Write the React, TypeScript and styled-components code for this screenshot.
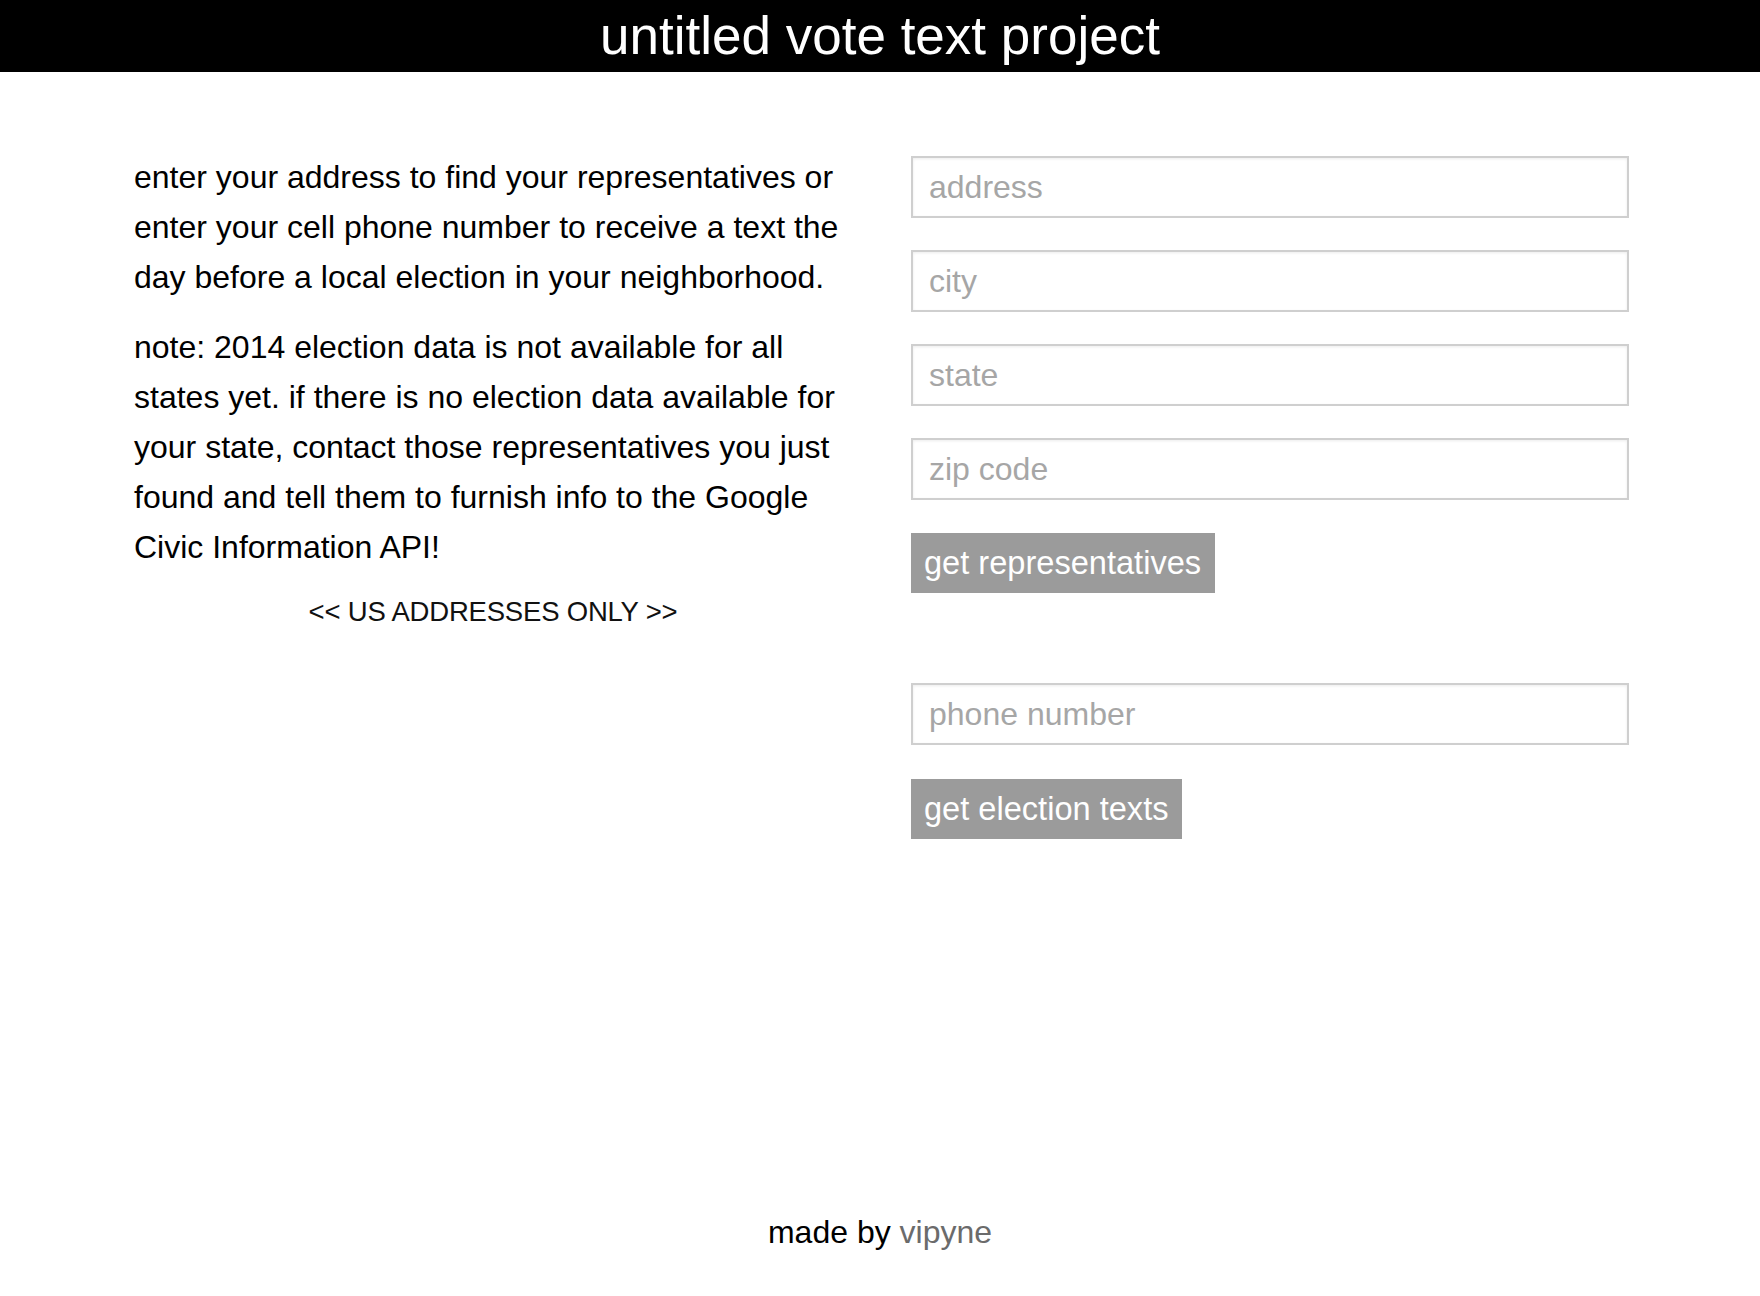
import React from "react";
import styled, { createGlobalStyle } from "styled-components";

const Global = createGlobalStyle`
  html, body { margin: 0; padding: 0; background: #fff; }
  body { font-family: "Liberation Sans", Arial, sans-serif; color: #000; }
  * { box-sizing: border-box; }
`;

const Page = styled.div`
  min-height: 100vh;
  display: flex;
  flex-direction: column;
`;

const Header = styled.header`
  height: 72px;
  background: #000;
  color: #fff;
  display: flex;
  align-items: center;
  justify-content: center;
`;

const Title = styled.h1`
  margin: 0;
  font-weight: 400;
  font-size: 53px;
  line-height: 72px;
`;

const Main = styled.main`
  display: grid;
  grid-template-columns: 718px 718px;
  column-gap: 59px;
  padding: 80px 0 0 134px;
`;

const Intro = styled.section`
  display: flex;
  flex-direction: column;
`;

const Para = styled.p`
  margin: 0 0 20px;
  font-size: 32px;
  line-height: 50px;
`;

const Notice = styled.div`
  text-align: center;
  font-size: 27.5px;
  line-height: 40px;
  color: #111;
  letter-spacing: -0.2px;
`;

const Form = styled.form`
  display: flex;
  flex-direction: column;
  align-items: flex-start;
  padding-top: 4px;
`;

const Field = styled.input<{ $gap?: number }>`
  width: 100%;
  height: 62px;
  margin-bottom: ${(p) => p.$gap ?? 32}px;
  padding: 0 16px;
  border: 2px solid #cfcfcf;
  box-shadow: inset 0 1px 3px rgba(0, 0, 0, 0.08);
  font-family: "Liberation Sans", Arial, sans-serif;
  font-size: 32px;
  color: #333;
  background: #fff;
  outline: none;
  &::placeholder { color: #a6a6a6; }
`;

const Button = styled.button<{ $after?: number }>`
  height: 60px;
  padding: 0 14px 0 13px;
  margin-bottom: ${(p) => p.$after ?? 0}px;
  border: none;
  background: #9b9b9b;
  color: #fff;
  font-family: "Liberation Sans", Arial, sans-serif;
  font-size: 32.6px;
  cursor: pointer;
`;

const Footer = styled.footer`
  margin-top: auto;
  padding-bottom: 44px;
  text-align: center;
  font-size: 32px;
  line-height: 40px;
`;

const Link = styled.a`
  color: #6b6b6b;
  text-decoration: none;
`;

export default function App() {
  return (
    <Page>
      <Global />
      <Header>
        <Title>untitled vote text project</Title>
      </Header>
      <Main>
        <Intro>
          <Para>
            enter your address to find your representatives or enter your cell
            phone number to receive a text the day before a local election in
            your neighborhood.
          </Para>
          <Para>
            note: 2014 election data is not available for all states yet. if
            there is no election data available for your state, contact those
            representatives you just found and tell them to furnish info to the
            Google Civic Information API!
          </Para>
          <Notice>&lt;&lt; US ADDRESSES ONLY &gt;&gt;</Notice>
        </Intro>
        <Form onSubmit={(e) => e.preventDefault()}>
          <Field placeholder="address" />
          <Field placeholder="city" />
          <Field placeholder="state" />
          <Field placeholder="zip code" $gap={33} />
          <Button type="button" $after={90}>get representatives</Button>
          <Field placeholder="phone number" $gap={34} />
          <Button type="button">get election texts</Button>
        </Form>
      </Main>
      <Footer>
        made by <Link href="#">vipyne</Link>
      </Footer>
    </Page>
  );
}
